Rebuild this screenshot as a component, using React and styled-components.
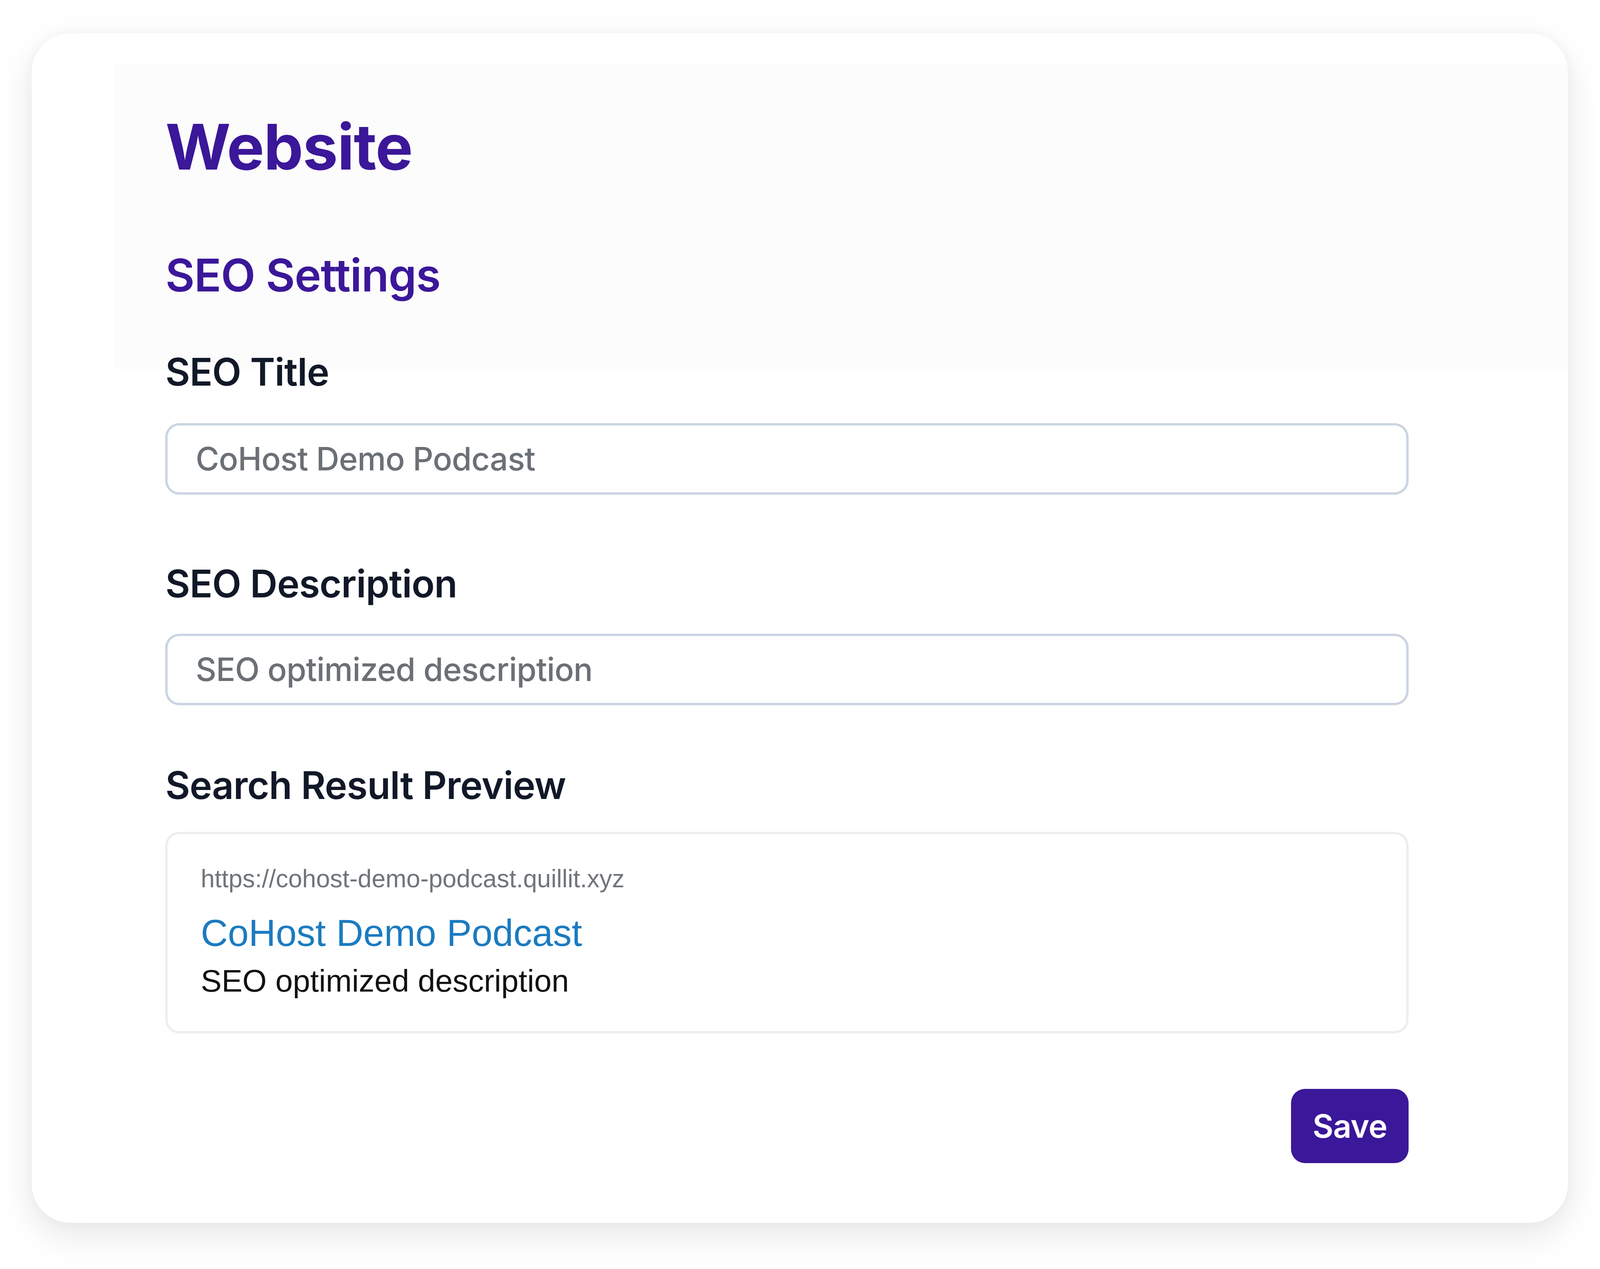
import React from 'react';
import styled, { createGlobalStyle } from 'styled-components';

const GlobalStyle = createGlobalStyle`
  html, body { margin: 0; padding: 0; background: #ffffff; }
  body { font-family: Inter, "Noto Sans", sans-serif; -webkit-font-smoothing: antialiased; }
  * { box-sizing: border-box; }
`;

const Page = styled.div`
  min-height: 100vh;
  padding: 85px 2.004vw 0 1.984vw;
`;

const Card = styled.main`
  height: 3045px;
  border-radius: 100px;
  background:
    linear-gradient(#fcfcfc, #fcfcfc) 5.159vw 80px / calc(100% - 5.159vw) 780px no-repeat,
    #ffffff;
  box-shadow: 0 30px 90px rgba(0, 0, 0, 0.1), 0 0 30px rgba(0, 0, 0, 0.03);
  padding: 211px 9.96vw 0 8.353vw;
  display: flex;
  flex-direction: column;
`;

const PageTitle = styled.h1`
  margin: 0;
  font-size: 161px;
  line-height: 160px;
  font-weight: 700;
  letter-spacing: -0.01em;
  color: #3b1799;
`;

const SectionTitle = styled.h2`
  margin: 193px 0 0;
  font-size: 115px;
  line-height: 112px;
  font-weight: 600;
  letter-spacing: -0.01em;
  color: #3b1799;
`;

const FieldLabel = styled.label`
  display: block;
  margin-top: ${(p) => p.$gap}px;
  font-size: 97px;
  line-height: 96px;
  font-weight: 600;
  letter-spacing: -0.01em;
  color: #111827;
`;

const TextInput = styled.input`
  display: block;
  width: 100%;
  height: 183px;
  margin-top: ${(p) => p.$gap}px;
  padding: 0 1.746vw;
  border: 6px solid #cbd5e1;
  border-radius: 36px;
  background: #ffffff;
  font-family: Inter, "Noto Sans", sans-serif;
  font-size: 82px;
  font-weight: 500;
  letter-spacing: -0.01em;
  color: #6b7076;
  outline: none;
`;

const Preview = styled.section`
  margin-top: 71px;
  border: 6px solid #eeeeee;
  border-radius: 36px;
  padding: 66px 2.063vw 72px;
  font-family: "Liberation Sans", Arial, sans-serif;
`;

const PreviewUrl = styled.div`
  font-size: 64px;
  line-height: 96px;
  color: #70757a;
`;

const PreviewTitle = styled.div`
  margin-top: 24px;
  font-size: 96px;
  line-height: 134px;
  color: #1b7bc0;
`;

const PreviewDesc = styled.div`
  font-size: 80px;
  line-height: 112px;
  color: #111111;
`;

const Actions = styled.div`
  margin-top: 142px;
  display: flex;
  justify-content: flex-end;
`;

const SaveButton = styled.button`
  width: 7.34vw;
  height: 190px;
  border: none;
  border-radius: 36px;
  background: #3b1799;
  color: #ffffff;
  font-family: Inter, "Noto Sans", sans-serif;
  font-size: 82px;
  font-weight: 600;
  letter-spacing: -0.01em;
  cursor: pointer;
`;

export default function App() {
  return (
    <>
      <GlobalStyle />
      <Page>
        <Card>
          <PageTitle>Website</PageTitle>
          <SectionTitle>SEO Settings</SectionTitle>
          <FieldLabel $gap={143} htmlFor="seo-title">SEO Title</FieldLabel>
          <TextInput $gap={83} id="seo-title" readOnly value="CoHost Demo Podcast" />
          <FieldLabel $gap={180} htmlFor="seo-desc">SEO Description</FieldLabel>
          <TextInput $gap={80} id="seo-desc" readOnly value="SEO optimized description" />
          <FieldLabel $gap={157} as="div">Search Result Preview</FieldLabel>
          <Preview>
            <PreviewUrl>https://cohost-demo-podcast.quillit.xyz</PreviewUrl>
            <PreviewTitle>CoHost Demo Podcast</PreviewTitle>
            <PreviewDesc>SEO optimized description</PreviewDesc>
          </Preview>
          <Actions>
            <SaveButton type="button">Save</SaveButton>
          </Actions>
        </Card>
      </Page>
    </>
  );
}
